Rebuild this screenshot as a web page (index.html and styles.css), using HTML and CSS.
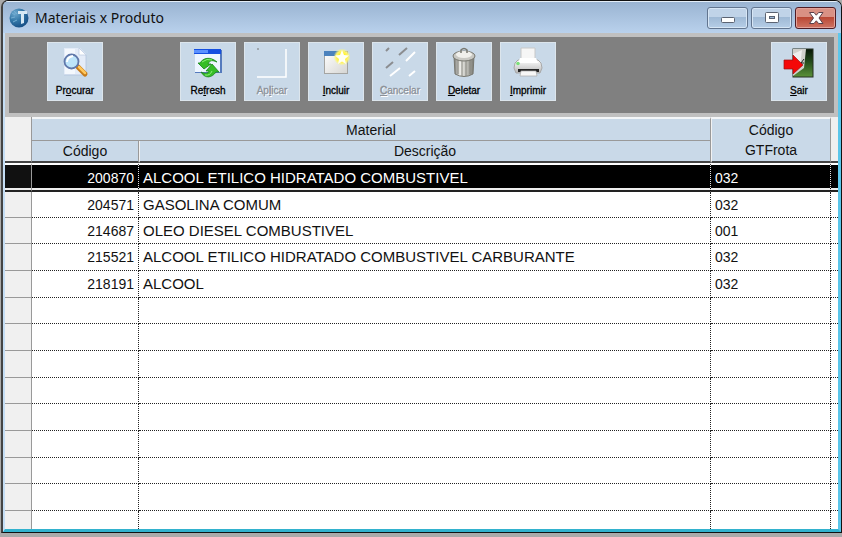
FILE: index.html
```html
<!DOCTYPE html>
<html lang="pt-BR">
<head>
<meta charset="utf-8">
<title>Materiais x Produto</title>
<link rel="stylesheet" href="styles.css">
</head>
<body>
<main class="window">
  <header class="titlebar">
    <svg class="app-icon" width="20" height="20" viewBox="0 0 20 20" aria-hidden="true">
      <defs><radialGradient id="orb" cx=".3" cy=".25" r=".8"><stop offset="0" stop-color="#6fa9cf"/><stop offset=".5" stop-color="#3478a8"/><stop offset="1" stop-color="#174f86"/></radialGradient></defs>
      <circle cx="10" cy="10" r="9.5" fill="url(#orb)"/>
      <path d="M3 5l3 2M2 10l4-1M4 14l4-2M5 3l3 3" stroke="#73aed2" fill="none"/>
      <path d="M9 3h9v3h-3v9l-3 1V6H9z" fill="#d6e8f4"/>
    </svg>
    <h1 class="title">Materiais x Produto</h1>
    <div class="controls">
      <button class="control" aria-label="Minimizar"><svg width="40" height="20" viewBox="0 0 40 20"><rect x="13.500" y="9.500" width="13" height="5" rx="1" fill="#fff" stroke="#5b6372"/></svg></button>
      <button class="control" aria-label="Maximizar"><svg width="40" height="20" viewBox="0 0 40 20"><rect x="13.500" y="4.500" width="13" height="10" rx="1" fill="#fff" stroke="#5b6372"/><rect x="17.500" y="8.500" width="5" height="2" fill="#9db9d8" stroke="#5b6372"/></svg></button>
      <button class="control control-close" aria-label="Fechar"><svg width="40" height="20" viewBox="0 0 40 20"><path d="M13.500 4.500h4.500l2.300 2.700 2.300-2.700H27l-4 5.500 4 5.500h-4.400l-2.300-2.700-2.300 2.700h-4.500l4-5.500z" fill="#fff" stroke="#59404a"/></svg></button>
    </div>
  </header>
  <div class="client">
    <nav class="toolbar" aria-label="Ferramentas">
      <button class="tool tool-search">
        <svg width="32" height="32" viewBox="0 0 32 32" aria-hidden="true">
          <path d="M5 1h16l6 6v21H5z" fill="#e4ecf8"/><path d="M6 2h10v25H6z" fill="#f4f8fd"/><path d="M20 1v7h7z" fill="#fff" stroke="#b9c8df" stroke-width=".7"/><path d="M27 8v20H5" fill="none" stroke="#aebfd8" stroke-width=".7"/>
          <path d="M19 20l7 7" stroke="#c77b18" stroke-width="5" stroke-linecap="round"/><path d="M20 20l6 6" stroke="#ffc75b" stroke-width="2.500" stroke-linecap="round"/>
          <circle cx="12.500" cy="14.500" r="7" fill="#bde4fa" stroke="#6179ab" stroke-width="1.800"/><path d="M8 15q0-5 6-6" stroke="#fff" stroke-width="2" fill="none"/>
        </svg><span class="label">Pr<u>o</u>curar</span>
      </button>
      <button class="tool">
        <svg width="32" height="32" viewBox="0 0 32 32" aria-hidden="true">
          <rect x="3" y="3" width="27" height="23" fill="#557abd"/><path d="M2 2h27v5H2z" fill="#154fe0"/><path d="M2 3h14v3H2z" fill="#5b91ff"/><path d="M3 7h25v18H3z" fill="#edf5ff"/>
          <path d="M8 16c3-5 10-7 17-1-5-2-7-2-9 2h3l-7 5-6-6z" fill="#36bd27" stroke="#168519" stroke-width=".8"/>
          <path d="M24 25c-4 6-11 7-15 0 4 2 7 2 8-1h-3l6-7 7 8z" fill="#36bd27" stroke="#168519" stroke-width=".8"/><path d="M10 15q5-4 10-2M13 28q5 1 7-4" fill="none" stroke="#8df077"/>
        </svg><span class="label">Re<u>f</u>resh</span>
      </button>
      <button class="tool" disabled>
        <svg width="32" height="32" viewBox="0 0 32 32" aria-hidden="true"><path d="M30 2v28H1" fill="none" stroke="#fff" stroke-width="1.500"/><path d="M1 2h2" stroke="#777"/></svg>
        <span class="label">Ap<u>l</u>icar</span>
      </button>
      <button class="tool">
        <svg width="32" height="32" viewBox="0 0 32 32" aria-hidden="true">
          <defs><linearGradient id="pane" x2="1" y2="1"><stop stop-color="#fff"/><stop offset="1" stop-color="#d5d5d2"/></linearGradient><radialGradient id="glow"><stop offset=".4" stop-color="#fff329"/><stop offset=".7" stop-color="#fff36e"/><stop offset="1" stop-color="#ffff73" stop-opacity="0"/></radialGradient></defs>
          <rect x="4.500" y="4.500" width="23" height="22" fill="url(#pane)" stroke="#a5a5a2"/><path d="M4 4h22v5H4z" fill="#4b82bd"/>
          <circle cx="22" cy="10" r="8.500" fill="url(#glow)"/><path d="M22 3l2 5 5 .5-4 3.500 1 5-4-2.500-4 2.500 1-5-4-3.500 5-.5z" fill="#fffff2"/>
        </svg><span class="label"><u>I</u>ncluir</span>
      </button>
      <button class="tool" disabled>
        <svg width="32" height="32" viewBox="0 0 32 32" aria-hidden="true"><path d="M2 4l3-3M15 8l8-7M2 21l7-6" stroke="#8b8d90" stroke-width="2"/><path d="M22 14l9-9M6 29l10-8M25 29l6-5" stroke="#fff" stroke-width="2"/></svg>
        <span class="label"><u>C</u>ancelar</span>
      </button>
      <button class="tool">
        <svg width="32" height="32" viewBox="0 0 32 32" aria-hidden="true">
          <defs><linearGradient id="tin"><stop stop-color="#74746e"/><stop offset=".3" stop-color="#efefeb"/><stop offset=".6" stop-color="#c6c6c0"/><stop offset="1" stop-color="#777770"/></linearGradient></defs>
          <path d="M6 9l1 18q9 5 18 0l1-18z" fill="url(#tin)" stroke="#777770"/><path d="M10 13v14M14 14v15M18 14v15M22 13v14" stroke="#85857e"/>
          <ellipse cx="16" cy="9" rx="11" ry="5" fill="#c9c9c4" stroke="#77776f"/><ellipse cx="16" cy="7.500" rx="8" ry="3.500" fill="#f0f0ec"/><path d="M13 6V3q3-3 6 0v3" fill="none" stroke="#77776f" stroke-width="1.500"/>
        </svg><span class="label"><u>D</u>eletar</span>
      </button>
      <button class="tool">
        <svg width="32" height="32" viewBox="0 0 32 32" aria-hidden="true">
          <defs><linearGradient id="case" x2="0" y2="1"><stop stop-color="#fff"/><stop offset="1" stop-color="#b6b6b6"/></linearGradient></defs>
          <path d="M9 1h14v14H9z" fill="#f6f6f6" stroke="#c8c8c8"/><path d="M6 13h20q4 2 4 8l-2 5H4l-2-5q0-6 4-8z" fill="url(#case)" stroke="#a8a8a8"/>
          <path d="M8 11h16l2 5H6z" fill="#fff"/><path d="M6 22h21v3H6z" fill="#252525"/><path d="M9 24h15l1 5H8z" fill="#f7f7f7" stroke="#aaa" stroke-width=".7"/><circle cx="6" cy="16.500" r="1.800" fill="#7be07b"/>
        </svg><span class="label"><u>I</u>mprimir</span>
      </button>
      <button class="tool tool-exit">
        <svg width="32" height="32" viewBox="0 0 32 32" aria-hidden="true">
          <defs><linearGradient id="field" x2="0" y2="1"><stop stop-color="#061607"/><stop offset=".45" stop-color="#244b1c"/><stop offset="1" stop-color="#5b9239"/></linearGradient></defs>
          <rect x="10" y="2" width="20" height="28" fill="url(#field)" stroke="#273022"/><path d="M10 2h13l-2 19-11 8z" fill="#d1d1cd"/><path d="M10 7l9-4-2 17-7 5z" fill="#eee"/><path d="M21 12l-3 4h3" stroke="#222" fill="none"/>
          <path d="M1 13h9V8l10 10-10 9v-5H1z" fill="#f50808" stroke="#9c1111" stroke-width=".7"/>
        </svg><span class="label"><u>S</u>air</span>
      </button>
    </nav>
    <table class="grid">
      <colgroup><col class="col-mark"><col class="col-code"><col><col class="col-fleet"><col class="col-rest"></colgroup>
      <thead>
        <tr class="head-top"><td class="mark" rowspan="2"></td><th colspan="2">Material</th><th class="fleet" rowspan="2">Código<br>GTFrota</th><td class="rest" rowspan="2"></td></tr>
        <tr class="head-sub"><th>Código</th><th>Descrição</th></tr>
      </thead>
      <tbody>
        <tr class="selected"><td class="mark"></td><td class="code">200870</td><td class="name">ALCOOL ETILICO HIDRATADO COMBUSTIVEL</td><td>032</td><td></td></tr>
        <tr class="after"><td class="mark"></td><td class="code">204571</td><td class="name">GASOLINA COMUM</td><td>032</td><td></td></tr>
        <tr><td class="mark"></td><td class="code">214687</td><td class="name">OLEO DIESEL COMBUSTIVEL</td><td>001</td><td></td></tr>
        <tr><td class="mark"></td><td class="code">215521</td><td class="name">ALCOOL ETILICO HIDRATADO COMBUSTIVEL CARBURANTE</td><td>032</td><td></td></tr>
        <tr><td class="mark"></td><td class="code">218191</td><td class="name">ALCOOL</td><td>032</td><td></td></tr>
        <tr><td class="mark"></td><td></td><td></td><td></td><td></td></tr>
        <tr><td class="mark"></td><td></td><td></td><td></td><td></td></tr>
        <tr><td class="mark"></td><td></td><td></td><td></td><td></td></tr>
        <tr><td class="mark"></td><td></td><td></td><td></td><td></td></tr>
        <tr><td class="mark"></td><td></td><td></td><td></td><td></td></tr>
        <tr><td class="mark"></td><td></td><td></td><td></td><td></td></tr>
        <tr><td class="mark"></td><td></td><td></td><td></td><td></td></tr>
        <tr><td class="mark"></td><td></td><td></td><td></td><td></td></tr>
        <tr class="partial"><td class="mark"></td><td></td><td></td><td></td><td></td></tr>
      </tbody>
    </table>
  </div>
</main>
</body>
</html>
```
FILE: styles.css
```css
* { box-sizing: border-box; }
body {
  margin: 0;
  background: #aaa;
  font-family: "Liberation Sans", Arial, sans-serif;
  color: #111;
}
.window {
  border: 1px solid #111;
  border-left: 2px solid #444;
  border-radius: 7px 7px 0 0;
  margin-left: 1px;
  background: #b9d1ea;
  overflow: hidden;
}
.titlebar {
  display: flex;
  align-items: center;
  height: 32px;
  padding: 0 5px 0 6px;
  gap: 6px;
  border-top: 1px solid #e4eef8;
  background: linear-gradient(#9ab4d2, #b9d1ec);
}
.title {
  flex: 1;
  margin: 0;
  font: 14px "Noto Sans", "Open Sans", sans-serif;
}
.controls { display: flex; gap: 3px; }
.control {
  width: 41px;
  height: 22px;
  padding: 0;
  display: grid;
  place-items: center;
  border: 1px solid #62758f;
  border-radius: 3px;
  box-shadow: inset 0 0 0 1px #d7e6f5;
  background: linear-gradient(#c0d3e8 45%, #9fb9d5 46%, #b6cee7);
}
.control-close {
  border-color: #501c24;
  box-shadow: inset 0 0 0 1px #e3a299;
  background: linear-gradient(#d99184 45%, #b94734 46%, #cf7464);
}
.client {
  border-left: 2px solid #c5def5;
  border-right: 3px solid #5cc6ea;
  border-bottom: 3px solid #32b2ce;
  background: #fff;
}
.toolbar {
  display: flex;
  gap: 8px;
  height: 84px;
  padding: 5px 7px 0 38px;
  border: 4px solid #c0c0c0;
  background: #808080;
}
.tool {
  display: flex;
  flex-direction: column;
  align-items: center;
  gap: 4px;
  width: 56px;
  height: 59px;
  padding: 4px 0 0;
  border: 1px solid #dce5ec;
  background: #c9d9e8;
  color: #000;
}
.tool-search { margin-right: 69px; }
.tool-exit { margin-left: auto; }
.label { font: 10px/16px "Liberation Sans", Arial, sans-serif; -webkit-text-stroke: 0.3px; }
.tool:disabled { color: #8c929a; text-shadow: 1px 1px #fff; }
.grid {
  width: 100%;
  table-layout: fixed;
  border-collapse: separate;
  border-spacing: 0;
  font-size: 14px;
  line-height: 20px;
}
.col-mark { width: 27px; }
.col-code { width: 107px; }
.col-fleet { width: 120px; }
.col-rest { width: 7px; }
th, td { padding: 0 4px; }
th {
  font-weight: normal;
  background: #c9d9e8;
  border-right: 1px solid #999;
  border-bottom: 1px solid #999;
}
.head-top th { border-top: 2px solid #f4f6f8; }
.head-top { height: 24px; }
.head-sub { height: 22px; }
.head-sub th, .head-top .fleet, .grid thead .mark, thead .rest { border-bottom: 2px solid #444; }
.head-sub th + th, .head-top .fleet { border-left: 1px solid #f2f2f2; }
.grid .mark {
  background: #f0f0f0;
  border-right: 1px solid #999;
  border-bottom: 1px solid #999;
}
.rest { background: #f0f0f0; }
tbody tr { height: 27px; }
tbody .after, tbody tr:nth-child(3n) { height: 26px; }
tbody td {
  border-right: 1px dotted #222;
  border-bottom: 1px dotted #222;
}
tbody td:last-child { border-right: 0; }
.code { text-align: right; }
.name { font-size: 15px; }
tbody .selected { height: 29px; }
.selected td {
  background: #000;
  color: #fff;
  border-top: 2px solid #fff;
  border-right-color: #ddd;
  border-bottom: 2px solid #222;
  box-shadow: inset 0 -2px #eee;
}
.grid .selected .mark { background: #111; border-bottom: 2px solid #222; }
.grid tbody .partial { height: 18px; }
.grid .partial td { border-bottom: 0; }
```
